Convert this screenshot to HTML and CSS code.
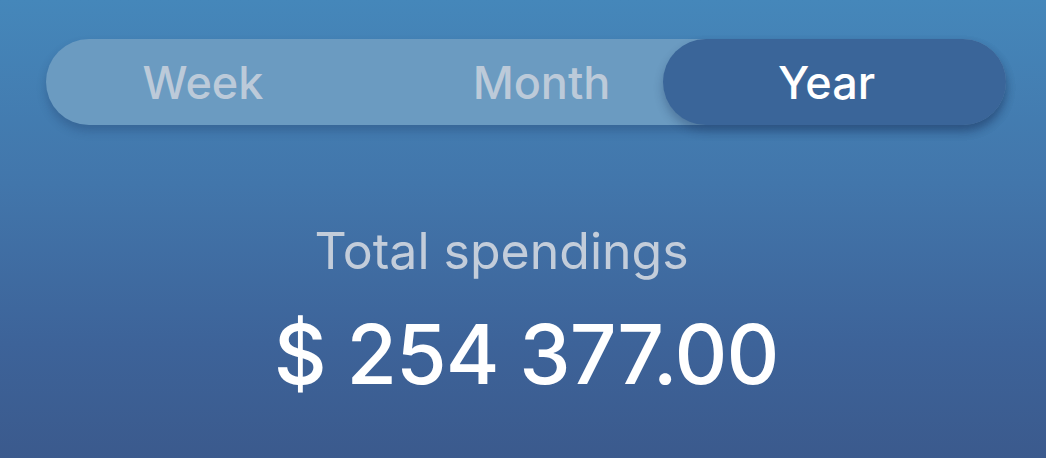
FILE: index.html
```html
<!DOCTYPE html>
<html>
<head>
<meta charset="utf-8">
<link rel="stylesheet" href="styles.css">
</head>
<body>
<div class="screen">
  <div class="segmented">
    <div class="seg seg-week">Week</div>
    <div class="seg seg-month">Month</div>
    <div class="seg seg-year active">Year</div>
  </div>
  <div class="total">
    <div class="total-label">Total spendings</div>
    <div class="total-amount">$ 254 377.00</div>
  </div>
</div>
</body>
</html>
```
FILE: styles.css
```css
html, body {
  margin: 0;
  padding: 0;
}
body {
  width: 1046px;
  height: 458px;
  overflow: hidden;
  font-family: "Inter", "Liberation Sans", sans-serif;
}
.screen {
  width: 1046px;
  height: 458px;
  box-sizing: border-box;
  padding: 39px 40px 0 46px;
  background: linear-gradient(180deg, #4587ba 0%, #4276ab 40%, #3d6399 75%, #3b5a8d 100%);
  display: flex;
  flex-direction: column;
}
.segmented {
  width: 960px;
  height: 86px;
  border-radius: 43px;
  background: #6b9bc1;
  display: grid;
  grid-template-columns: 314px 303px 343px;
  box-shadow: 0 6px 10px rgba(20, 40, 80, 0.25);
}
.seg {
  display: flex;
  align-items: center;
  justify-content: center;
  font-size: 45px;
  font-weight: 500;
  color: #bccad9;
  border-radius: 43px;
}
.seg-month {
  padding-left: 60px;
}
.seg-year {
  padding-right: 16px;
}
.seg.active {
  background: #3a6599;
  color: #ffffff;
  box-shadow: 0 6px 10px rgba(20, 40, 80, 0.3);
}
.total {
  display: flex;
  flex-direction: column;
  align-items: center;
  margin-top: 96px;
}
.total-label {
  font-size: 50px;
  font-weight: 400;
  color: #c3cdda;
  line-height: 60px;
  padding-right: 49px;
}
.total-amount {
  font-size: 82px;
  font-weight: 500;
  letter-spacing: -1px;
  color: #ffffff;
  line-height: 100px;
  margin-top: 24px;
}
```
